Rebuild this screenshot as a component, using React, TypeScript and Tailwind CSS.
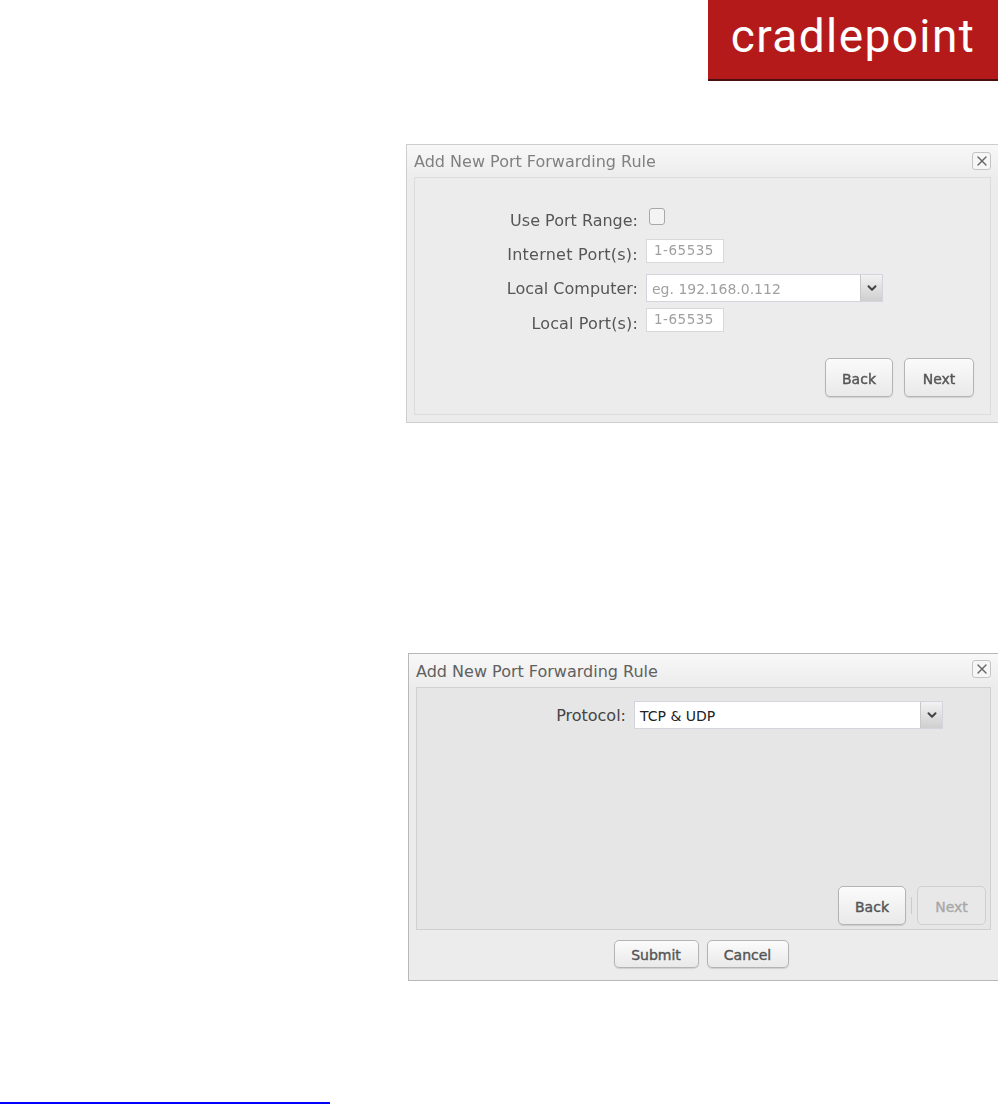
import { ChevronDown, X } from 'lucide-react';

const font = "font-['DejaVu_Sans','Liberation_Sans',sans-serif]";

function CloseButton() {
  return (
    <div className="flex h-[18px] w-[19px] items-center justify-center rounded-[3px] border border-[#c4c4c4] bg-[#f6f6f6] text-[#666]">
      <X size={16} strokeWidth={2} />
    </div>
  );
}

function NumberInput() {
  return (
    <div className="flex h-6 w-[78px] items-center border border-[#d8d8d8] bg-white pl-[7px] text-[13.5px] leading-none tracking-[0.5px] text-[#a0a0a0]">
      1-65535
    </div>
  );
}

function FormRow({
  label,
  children,
  className,
  labelClass,
}: {
  label: string;
  children: React.ReactNode;
  className: string;
  labelClass: string;
}) {
  return (
    <div className={`flex items-center gap-2 ${className}`}>
      <div className={`w-[223px] text-right text-[16px] leading-none text-[#555] ${labelClass}`}>{label}</div>
      {children}
    </div>
  );
}

function Select({ value, width, valueClass }: { value: string; width: string; valueClass: string }) {
  return (
    <div className={`flex h-7 items-stretch border border-[#d4d4de] bg-white ${width}`}>
      <div className={`flex flex-1 items-center pl-[5px] pt-[1px] text-[14px] leading-none ${valueClass}`}>{value}</div>
      <div className="flex w-[22px] items-center justify-center border-l border-[#c8c8c8] bg-gradient-to-b from-[#f2f2f2] to-[#cfcfcf] text-[#444]">
        <ChevronDown size={14} strokeWidth={3.5} />
      </div>
    </div>
  );
}

function Button({ label, size, muted }: { label: string; size: string; muted?: boolean }) {
  return (
    <div
      className={`flex items-center justify-center rounded-[5px] border pt-[2px] text-[14px] leading-none [-webkit-text-stroke:0.4px] ${size} ${
        muted
          ? 'border-[#cfcfcf] bg-[#e8e8e8] text-[#a8a8a8]'
          : 'border-[#b4b4b4] bg-gradient-to-b from-[#fbfbfb] to-[#e9e9e9] text-[#555] shadow-[0_1px_1px_rgba(0,0,0,0.12)]'
      }`}
    >
      {label}
    </div>
  );
}

export default function App() {
  return (
    <div className={`flex h-[1104px] w-[998px] flex-col items-end overflow-hidden bg-white ${font}`}>
      <div className="flex h-[81px] w-[290px] items-center justify-center border-b-2 border-[#4a1010] bg-[#b51a1b] pb-[8px] font-['Roboto',sans-serif] text-[46px] font-normal leading-none tracking-[1.4px] text-white">
        cradlepoint
      </div>

      <div className="mt-[63px] flex h-[279px] w-[592px] flex-col border border-r-0 border-[#cdcdcd] bg-gradient-to-b from-[#f8f8f8] to-[#ececec] to-[12%] pb-[7px] blur-[0.4px]">
        <div className="flex h-8 items-start justify-between pl-[7px] pr-[7px] pt-[7px]">
          <div className="pt-[2px] text-[16px] leading-none text-[#808080]">Add New Port Forwarding Rule</div>
          <CloseButton />
        </div>
        <div className="mx-[7px] flex flex-1 flex-col border border-[#dcdcdc] bg-[#ececec] pt-[30px]">
          <FormRow label="Use Port Range:" className="h-[17px]" labelClass="pt-[8px]">
            <div className="ml-[3px] h-[17px] w-4 rounded-[3px] border border-[#a8a8a8] bg-[#f4f4f4]" />
          </FormRow>
          <FormRow label="Internet Port(s):" className="mt-[14px]" labelClass="pt-[8px] tracking-[0.25px]">
            <NumberInput />
          </FormRow>
          <FormRow label="Local Computer:" className="mt-[11px]" labelClass="pt-[2px]">
            <Select value="eg. 192.168.0.112" width="w-[237px]" valueClass="text-[#a0a0a0]" />
          </FormRow>
          <FormRow label="Local Port(s):" className="mt-[6px]" labelClass="pt-[8px] tracking-[0.15px]">
            <NumberInput />
          </FormRow>
          <div className="mt-[26px] flex justify-end gap-[11px] pr-4">
            <Button label="Back" size="h-[39px] w-[68px]" />
            <Button label="Next" size="h-[39px] w-[70px]" />
          </div>
        </div>
      </div>

      <div className="mt-[230px] flex h-[328px] w-[590px] flex-col border border-r-0 border-[#b8b8b8] bg-gradient-to-b from-[#f8f8f8] to-[#ececec] to-[10%]">
        <div className="flex h-[33px] items-start justify-between pl-[7px] pr-[7px] pt-[6px]">
          <div className="pt-[4px] text-[16px] leading-none text-[#606060]">Add New Port Forwarding Rule</div>
          <CloseButton />
        </div>
        <div className="mx-[7px] flex h-[243px] flex-col border border-[#d0d0d0] bg-[#e6e6e6] pt-[13px]">
          <div className="flex items-center gap-2">
            <div className="w-[209px] pt-[2px] text-right text-[16px] leading-none text-[#444]">Protocol:</div>
            <Select value="TCP & UDP" width="w-[309px]" valueClass="text-[#222]" />
          </div>
          <div className="mt-[157px] flex items-center justify-end pr-1">
            <Button label="Back" size="h-[39px] w-[68px]" />
            <div className="mx-[5px] h-[17px] w-px bg-[#b8cfe8]" />
            <Button label="Next" size="h-[39px] w-[69px]" muted />
          </div>
        </div>
        <div className="mt-[10px] flex justify-center gap-2 pr-[5px]">
          <Button label="Submit" size="h-7 w-[85px]" />
          <Button label="Cancel" size="h-7 w-[82px]" />
        </div>
      </div>

      <div className="mt-auto h-[2px] w-[330px] self-start bg-[#0000ff]" />
    </div>
  );
}
